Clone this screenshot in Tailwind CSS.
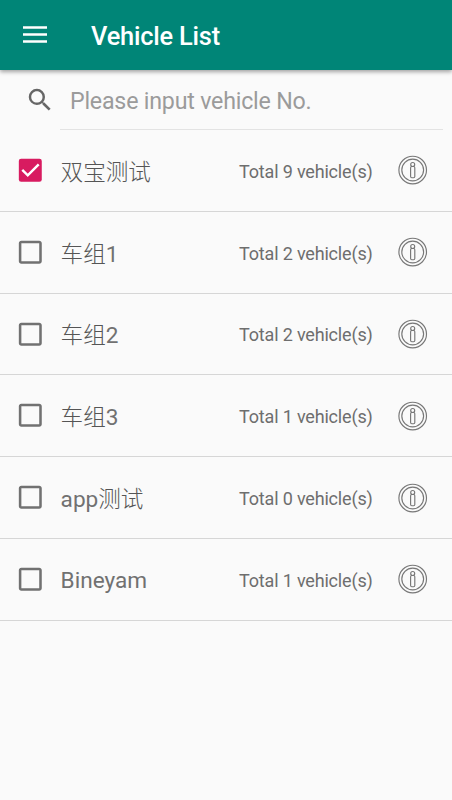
<!DOCTYPE html>
<html lang="en">
<head>
<meta charset="utf-8">
<title>Vehicle List</title>
<script src="https://cdn.jsdelivr.net/npm/@tailwindcss/browser@4"></script>
</head>
<body class="bg-[#fafafa] font-[Roboto,'Noto_Sans_CJK_SC',sans-serif] h-[800px] overflow-hidden flex flex-col">
<svg class="hidden">
  <symbol id="off" viewBox="0 0 24 24"><path fill="#717171" d="M19 5v14H5V5h14m0-2H5c-1.100 0-2 .9-2 2v14c0 1.100.9 2 2 2h14c1.100 0 2-.9 2-2V5c0-1.100-.9-2-2-2z"/></symbol>
  <symbol id="on" viewBox="0 0 24 24"><rect x="3" y="3" width="18" height="18" rx="1.800" fill="#d81b60"/><path d="M5.700 11.700 10 16l8.600-8.600" fill="none" stroke="#fff" stroke-width="1.900"/></symbol>
  <symbol id="info" viewBox="0 0 30 30"><g fill="none" stroke="#777" stroke-width="1.150"><circle cx="14.700" cy="15" r="13.800"/><circle cx="14.700" cy="15" r="10.900"/><circle cx="14.700" cy="9.500" r="2"/><rect x="12.600" y="11.500" width="4.200" height="11.200" rx="1.200"/></g></symbol>
</svg>
<header class="h-[70px] shrink-0 bg-[#008577] shadow-[0_2px_4px_rgba(0,0,0,0.35)] flex items-center relative">
  <svg class="ml-[23px] w-6 h-[18px]" viewBox="0 0 24 18"><path d="M0 2h24M0 9h24M0 16h24" stroke="#fff" stroke-width="2.300" transform="translate(0 -.5)"/></svg>
  <h1 class="ml-11 pt-[2px] text-[25.400px] tracking-[-0.200px] leading-[30px] font-medium text-white whitespace-nowrap">Vehicle List</h1>
</header>
<div class="h-[60px] shrink-0 flex">
  <svg class="ml-[25px] mt-[15px] w-[30px] h-[30px] shrink-0" viewBox="0 0 24 24"><path fill="#666" d="M15.500 14h-.79l-.28-.27A6.470 6.470 0 0 0 16 9.500 6.500 6.500 0 1 0 9.500 16c1.610 0 3.090-.59 4.230-1.570l.27.28v.79l5 4.990L20.490 19l-4.990-5zm-6 0C7.010 14 5 11.990 5 9.500S7.010 5 9.500 5 14 7.010 14 9.500 11.990 14 9.500 14z"/></svg>
  <div class="ml-[5px] mr-[9px] flex-1 border-b border-[#e3e3e3] pl-[10px] pt-[16px] text-[23.200px] tracking-[-0.200px] leading-[30px] text-[#9b9b9b] whitespace-nowrap">Please input vehicle No.</div>
</div>
<main id="list"></main>
<script>
const groups = [['双宝测试', '', 9, true], ['车组', '1', 2], ['车组', '2', 2], ['车组', '3', 1], ['app', '测试', 0], ['', 'Bineyam', 1]];
const part = s => /[\u4e00-\u9fff]/.test(s) ? `<span class="font-light text-[#555]">${s}</span>` : s;
document.getElementById('list').innerHTML = groups.map(([a, b, n, checked]) => `
  <div class="h-[81.800px] border-b border-[#d6d6d6] flex items-center">
    <svg class="ml-[15px] w-[30.600px] h-[30.600px] shrink-0"><use href="#${checked ? 'on' : 'off'}"/></svg>
    <span class="ml-[15px] ${b === 'Bineyam' ? 'pt-[4px]' : 'pt-[5px]'} w-[178px] text-[22.600px] leading-[34px] text-[#717171] whitespace-nowrap">${part(a)}${part(b)}</span>
    <span class="pt-[3px] pl-[0.500px] w-[134px] text-[18px] tracking-[-0.180px] leading-[24px] text-[#6e6e6e] whitespace-nowrap">Total ${n} vehicle(s)</span>
    <svg class="ml-[25px] w-[30px] h-[30px] shrink-0"><use href="#info"/></svg>
  </div>`).join('');
</script>
</body>
</html>
